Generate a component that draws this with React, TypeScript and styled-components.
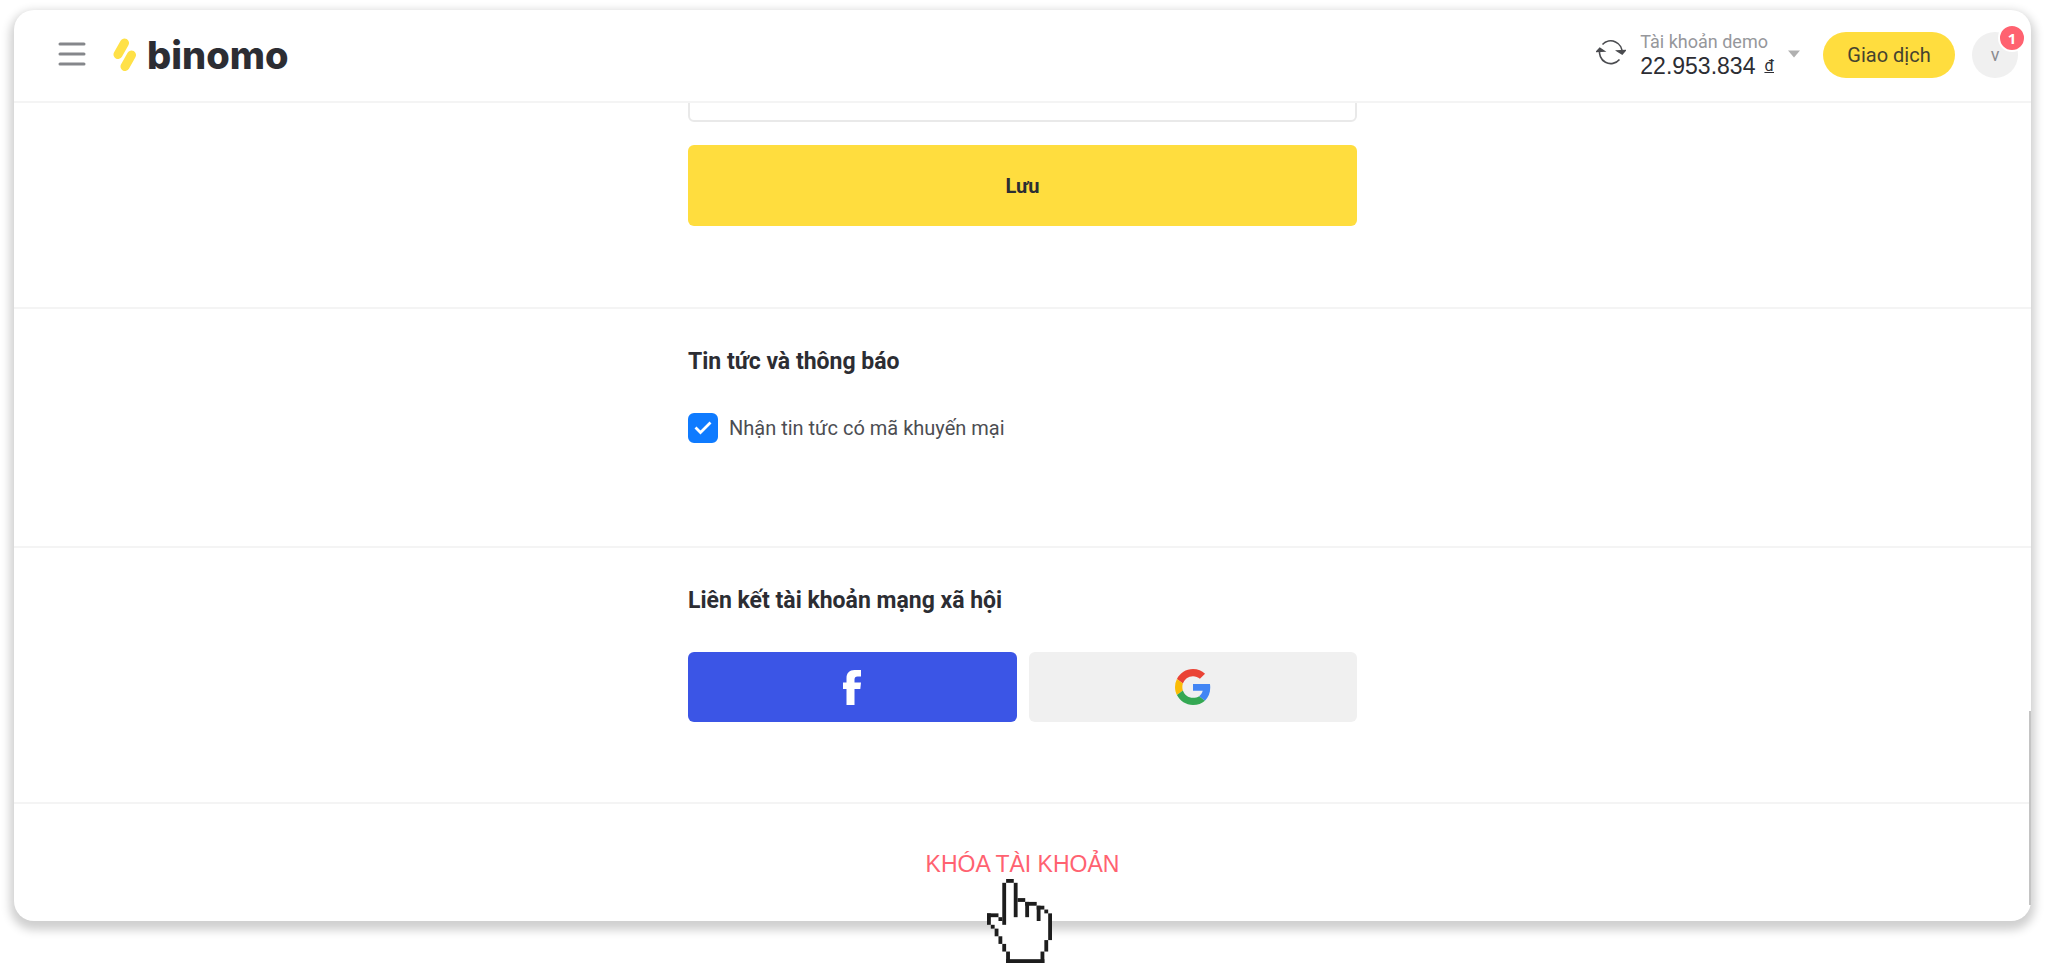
import React from 'react';
import styled, { createGlobalStyle } from 'styled-components';

const GlobalStyle = createGlobalStyle`
  *, *::before, *::after { box-sizing: border-box; }
  body {
    margin: 0;
    background: #fff;
    color: #2c2d33;
    font-family: Roboto, "Liberation Sans", sans-serif;
  }
  button { font-family: inherit; color: inherit; border: 0; padding: 0; cursor: pointer; }
  svg { display: block; }
`;

const Page = styled.div`
  padding: 10px 17px 49px 14px;
`;

const Card = styled.div`
  position: relative;
  border-radius: 20px;
  background: #fff;
  box-shadow: 0 5px 10px 4px rgba(0, 0, 0, 0.19);
`;

const Header = styled.header`
  display: flex;
  align-items: center;
  height: 93px;
  padding: 0 13px 2px 44px;
  border-bottom: 2px solid #f4f4f4;
`;

const MenuButton = styled.button`
  background: none;
  margin-right: 27px;
  padding-bottom: 2px;
`;

const Logo = styled.a`
  display: flex;
  align-items: center;
  gap: 10px;
  color: #2c2d33;
  text-decoration: none;
`;

const LogoText = styled.span`
  font-family: Inter, sans-serif;
  font-size: 38px;
  font-weight: 800;
  line-height: 40px;
`;

const HeaderActions = styled.div`
  display: flex;
  align-items: center;
  margin-left: auto;
`;

const RefreshButton = styled.button`
  background: none;
  margin-right: 14px;
  padding-bottom: 6px;
`;

const Account = styled.button`
  display: flex;
  align-items: center;
  gap: 14px;
  margin-right: 23px;
  padding-bottom: 2px;
  background: none;
  text-align: left;
`;

const AccountName = styled.span`
  display: block;
  color: #96979b;
  font-size: 18px;
  line-height: 24px;
`;

const Balance = styled.span`
  display: block;
  font-family: "Liberation Sans", sans-serif;
  font-size: 23px;
  line-height: 24px;
`;

const Currency = styled.span`
  margin-left: 9px;
  font-family: Roboto, sans-serif;
  font-size: 16px;
  line-height: 16px;
  text-decoration: underline;
  vertical-align: 3px;
`;

const TradeButton = styled.button`
  height: 46px;
  width: 132px;
  margin-right: 17px;
  border-radius: 23px;
  background: #ffdd3e;
  font-size: 20px;
  color: #46432f;
`;

const Avatar = styled.button`
  position: relative;
  width: 46px;
  height: 46px;
  border-radius: 50%;
  background: #f0f0f0;
  color: #8b8c90;
  font-size: 18px;
`;

const Badge = styled.span`
  position: absolute;
  top: -8px;
  right: -8px;
  width: 28px;
  height: 28px;
  border: 2px solid #fff;
  border-radius: 50%;
  background: #ff6270;
  color: #fff;
  font: 700 15px/24px "Open Sans", sans-serif;
  text-align: center;
`;

const Section = styled.section<{ $height: number; $top?: number }>`
  min-height: ${(p) => p.$height}px;
  padding-top: ${(p) => p.$top ?? 37}px;
  border-bottom: 2px solid #f4f4f4;
`;

const Column = styled.div`
  width: 100%;
  max-width: 669px;
  margin: 0 auto;
`;

const FieldClip = styled.div`
  display: flex;
  align-items: flex-end;
  height: 19px;
  margin-bottom: 23px;
  overflow: hidden;
`;

const Field = styled.input`
  flex: none;
  width: 100%;
  height: 70px;
  border: 2px solid #e9e9e9;
  border-radius: 6px;
  background: #fff;
  outline: none;
`;

const SaveButton = styled.button`
  display: block;
  width: 100%;
  height: 81px;
  border-radius: 6px;
  background: #ffdd3e;
  font-size: 20px;
  font-weight: 700;
`;

const Title = styled.h2`
  margin: 0 0 35px;
  font-size: 23px;
  font-weight: 700;
  line-height: 32px;
`;

const CheckLabel = styled.label`
  display: flex;
  align-items: center;
  gap: 11px;
  color: #4c4d52;
  font-size: 20px;
  line-height: 30px;
`;

const CheckBox = styled.span`
  display: grid;
  width: 30px;
  height: 30px;

  > * { grid-area: 1 / 1; }
  > svg { place-self: center; pointer-events: none; opacity: 0; }
  > input:checked + svg { opacity: 1; }
`;

const CheckInput = styled.input`
  appearance: none;
  width: 30px;
  height: 30px;
  margin: 0;
  border: 2px solid #0f7bff;
  border-radius: 6px;
  background: #fff;
  &:checked { background: #0f7bff; }
`;

const SocialRow = styled.div`
  display: grid;
  grid-template-columns: 1fr 1fr;
  gap: 12px;
`;

const SocialButton = styled.button<{ $bg: string }>`
  display: flex;
  align-items: center;
  justify-content: center;
  height: 70px;
  border-radius: 6px;
  background: ${(p) => p.$bg};
`;

const Footer = styled.footer`
  display: flex;
  justify-content: center;
  min-height: 117px;
  padding-top: 44px;
`;

const BlockAction = styled.div`
  position: relative;
`;

const BlockButton = styled.button`
  background: none;
  color: #ff6270;
  font-family: "Liberation Sans", sans-serif;
  font-size: 23px;
  line-height: 32px;
`;

const Pointer = styled.svg`
  position: absolute;
  top: 31px;
  left: calc(50% - 35px);
  pointer-events: none;
`;

const ScrollThumb = styled.div`
  position: absolute;
  top: 701px;
  right: 0;
  bottom: 16px;
  width: 2px;
  background: #c4c4c4;
`;

/* Pixel-art hand: [x, y, width, height] on a 17 x 22 grid */
const HAND: number[][] = [
  [5, 0, 2, 1], [4, 1, 1, 11], [7, 1, 1, 9], [8, 5, 2, 1], [10, 6, 3, 1],
  [10, 6, 1, 4], [13, 7, 2, 1], [13, 7, 1, 4], [15, 8, 1, 1], [16, 9, 1, 7],
  [15, 16, 1, 3], [14, 19, 1, 3], [5, 21, 10, 1], [5, 19, 1, 3], [4, 17, 1, 2],
  [3, 15, 1, 2], [2, 13, 1, 2], [1, 12, 1, 1], [0, 9, 1, 3], [0, 9, 3, 1], [3, 10, 1, 1],
];

function HandPointer() {
  return (
    <Pointer width="65" height="84" viewBox="0 0 17 22" preserveAspectRatio="none" aria-hidden="true">
      <path
        fill="#fff"
        d="M5 .5h2v1h.5V5.5H10v1h3v1h2v1h1v1h.5V16h-1v3h-1v2.500h-9V19h-1v-2h-1v-2h-1v-2h-1v-1h-1v-2.500H3v1h1.500V1H5z"
      />
      {HAND.map(([x, y, w, h], i) => (
        <rect key={i} x={x} y={y} width={w} height={h} fill="#1d1d1d" />
      ))}
    </Pointer>
  );
}

function LogoMark() {
  return (
    <svg width="24" height="34" viewBox="0 0 24 34" aria-hidden="true">
      <g stroke="#ffe147" strokeWidth="9" strokeLinecap="round">
        <path d="M11.500 5 5 16.500" />
        <path d="M18.500 17 12 28.500" />
      </g>
    </svg>
  );
}

function RefreshIcon() {
  return (
    <svg width="30" height="26" viewBox="0 0 30 26" fill="none" stroke="#4b4c50" strokeWidth="1.600" aria-hidden="true">
      <path d="M6.500 5.500A11.300 11.300 0 0 1 26 14.500" />
      <path d="M23.500 20.500A11.300 11.300 0 0 1 4 10" />
      <path d="M21.500 12 26.200 15 29.200 11.500z" fill="#4b4c50" />
      <path d="M.8 12.500 3.800 9.200 8 12z" fill="#4b4c50" />
    </svg>
  );
}

export default function App() {
  return (
    <>
      <GlobalStyle />
      <Page>
        <Card>
          <Header>
            <MenuButton aria-label="Menu">
              <svg width="28" height="26" viewBox="0 0 28 26" stroke="#85878b" strokeWidth="3" strokeLinecap="round">
                <path d="M2 3h24M2 13h24M2 23h24" />
              </svg>
            </MenuButton>
            <Logo href="#">
              <LogoMark />
              <LogoText>binomo</LogoText>
            </Logo>
            <HeaderActions>
              <RefreshButton aria-label="Refresh">
                <RefreshIcon />
              </RefreshButton>
              <Account>
                <span>
                  <AccountName>Tài khoản demo</AccountName>
                  <Balance>
                    22.953.834<Currency>đ</Currency>
                  </Balance>
                </span>
                <svg width="12" height="8" viewBox="0 0 12 8" aria-hidden="true">
                  <path d="M0 .5h12L6 7.500z" fill="#b0b0b0" />
                </svg>
              </Account>
              <TradeButton>Giao dịch</TradeButton>
              <Avatar>
                v<Badge>1</Badge>
              </Avatar>
            </HeaderActions>
          </Header>
          <main>
            <Section $height={206} $top={0}>
              <Column>
                <FieldClip>
                  <Field type="text" aria-label="Field" />
                </FieldClip>
                <SaveButton>Lưu</SaveButton>
              </Column>
            </Section>
            <Section $height={239}>
              <Column>
                <Title>Tin tức và thông báo</Title>
                <CheckLabel>
                  <CheckBox>
                    <CheckInput type="checkbox" defaultChecked />
                    <svg width="18" height="14" viewBox="0 0 18 14" fill="none" stroke="#fff" strokeWidth="2.800">
                      <path d="M1.500 6.500 6.500 11.500 16.500 1.500" />
                    </svg>
                  </CheckBox>
                  Nhận tin tức có mã khuyến mại
                </CheckLabel>
              </Column>
            </Section>
            <Section $height={256}>
              <Column>
                <Title>Liên kết tài khoản mạng xã hội</Title>
                <SocialRow>
                  <SocialButton $bg="#3b55e6" aria-label="Facebook">
                    <svg width="18" height="35" viewBox="0 0 18 35" aria-hidden="true">
                      <path
                        fill="#fff"
                        d="M3.500 35V19H0v-6.500h3.500V8C3.500 3 6.500 0 11.500 0H18v6.500h-3.500C12.500 6.500 11.500 7.500 11.500 9.500v3H18L17.300 19h-5.800v16z"
                      />
                    </svg>
                  </SocialButton>
                  <SocialButton $bg="#f0f0f0" aria-label="Google">
                    <svg width="36" height="36" viewBox="0 0 48 48" aria-hidden="true">
                      <path fill="#EA4335" d="M24 9.500c3.540 0 6.710 1.220 9.210 3.600l6.850-6.850C35.900 2.380 30.470 0 24 0 14.620 0 6.510 5.380 2.560 13.220l7.980 6.190C12.430 13.720 17.740 9.500 24 9.500z" />
                      <path fill="#4285F4" d="M46.980 24.550c0-1.570-.15-3.090-.38-4.550H24v9.020h12.940c-.58 2.960-2.260 5.480-4.780 7.180l7.730 6c4.510-4.180 7.090-10.360 7.090-17.650z" />
                      <path fill="#FBBC05" d="M10.530 28.590A14.500 14.500 0 0 1 9.770 24c0-1.600.27-3.140.76-4.590l-7.980-6.190A23.900 23.900 0 0 0 0 24c0 3.880.92 7.540 2.560 10.780l7.970-6.190z" />
                      <path fill="#34A853" d="M24 48c6.480 0 11.930-2.130 15.890-5.810l-7.730-6C30 37.640 27.240 38.490 24 38.490c-6.260 0-11.570-4.220-13.470-9.910l-7.980 6.190C6.510 42.620 14.620 48 24 48z" />
                    </svg>
                  </SocialButton>
                </SocialRow>
              </Column>
            </Section>
          </main>
          <Footer>
            <BlockAction>
              <BlockButton>KHÓA TÀI KHOẢN</BlockButton>
              <HandPointer />
            </BlockAction>
          </Footer>
          <ScrollThumb />
        </Card>
      </Page>
    </>
  );
}
